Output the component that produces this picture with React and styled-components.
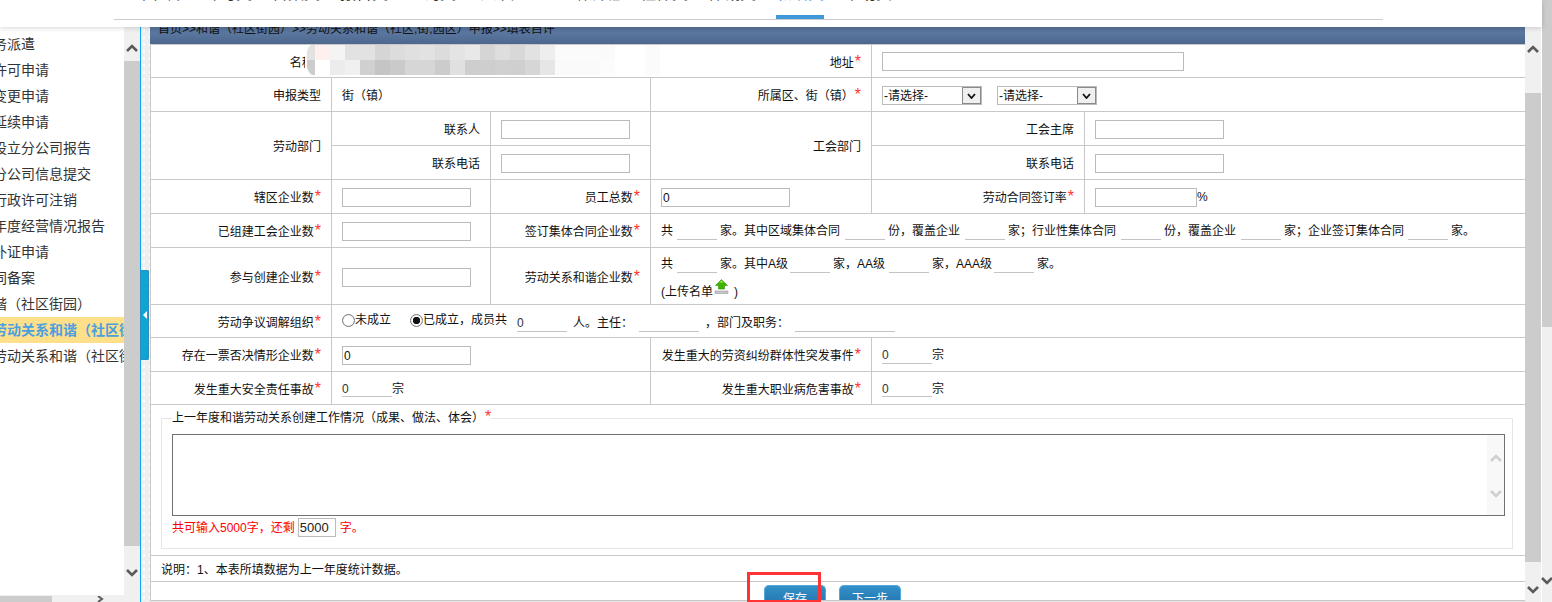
import React from 'react';
import styled, { createGlobalStyle } from 'styled-components';

const GlobalStyle = createGlobalStyle`
  html, body {
    margin: 0;
    padding: 0;
    height: 100%;
    overflow: hidden;
    background: #fff;
  }
  body, input, select, textarea, button {
    font-family: "Liberation Sans", "Noto Sans CJK SC", sans-serif;
    font-size: 12px;
    color: #111;
  }
`;

const Page = styled.div`
  display: flex;
  width: 1552px;
  height: 602px;
  overflow: hidden;
`;

const Column = styled.div`
  display: flex;
  flex-direction: column;
  width: 1542px;
`;

const Header = styled.header`
  position: relative;
  z-index: 2;
  flex: none;
  height: 27px;
  background: #fff;
  box-shadow: 0 1px 5px rgba(0, 0, 0, 0.16);
`;

const Nav = styled.nav`
  display: flex;
  gap: 20px;
  width: 1269px;
  height: 20px;
  margin-left: 114px;
  padding-left: 22px;
  box-sizing: border-box;
  border-bottom: 1px solid #ccc;
`;

const Tab = styled.a`
  display: block;
  flex: none;
  width: 48px;
  height: 19px;
  margin-left: ${props => props.$gap || 0}px;
  font-size: 16px;
  line-height: 16px;
  white-space: nowrap;
  color: ${props => props.$active ? '#3f97dc' : '#333'};
  box-shadow: ${props => props.$active ? 'inset 0 -4px 0 #3f97dc' : 'none'};

  span {
    display: block;
    margin-top: -14px;
  }
`;

const Body = styled.div`
  display: flex;
  flex: 1;
  min-height: 0;
`;

const Sidebar = styled.aside`
  display: flex;
  flex: none;
  width: 140px;
`;

const SideColumn = styled.div`
  display: flex;
  flex-direction: column;
  width: 124px;
`;

const SideList = styled.ul`
  flex: 1;
  margin: 0;
  padding: 4px 0 0;
  list-style: none;
  overflow: hidden;
`;

const SideItem = styled.li`
  height: 26px;
  font-size: 14px;
  font-weight: ${props => props.$active ? 700 : 400};
  line-height: 26px;
  white-space: nowrap;
  overflow: hidden;
  color: ${props => props.$active ? '#4a9fe0' : '#333'};
  background: ${props => props.$active ? '#ffe08a' : 'transparent'};

  span {
    display: block;
    margin-left: -7px;
  }
`;

const HScroll = styled.div`
  display: flex;
  flex: none;
  align-items: flex-start;
  height: 7px;
  background: #f0f0f0;
`;

const HThumb = styled.div`
  width: 52px;
  height: 7px;
  margin-top: 1px;
  background: #ccc;
`;

const HArrow = styled.svg`
  width: 8px;
  height: 7px;
  margin-left: 44px;
  margin-top: 1px;
`;

const VBar = styled.div`
  display: flex;
  flex: none;
  flex-direction: column;
  width: ${props => props.$w}px;
  margin-right: ${props => props.$mr || 0}px;
  background: #f0f0f0;
`;

const BarEnd = styled.div`
  display: flex;
  flex: ${props => props.$grow ? 1 : 'none'};
  justify-content: center;
  height: ${props => props.$h ? `${props.$h}px` : 'auto'};
  padding-top: ${props => props.$pt}px;
  box-sizing: border-box;
`;

const BarThumb = styled.div`
  flex: none;
  height: ${props => props.$h}px;
  background: #ccc;
`;

const Chevron = styled.svg`
  flex: none;
  width: 12px;
  height: 8px;
  fill: none;
  stroke: ${props => props.$color || '#5a5a5a'};
  stroke-width: 2.6;
`;

const Splitter = styled.div`
  flex: none;
  width: 9px;
  border-left: 1px solid #0aa5f5;
  background-color: #efefef;
  background-image: radial-gradient(#fbfbfb 1px, transparent 1.2px);
  background-size: 6px 7px;
`;

const SplitHandle = styled.div`
  display: flex;
  align-items: center;
  justify-content: center;
  height: 90px;
  margin: 243px 0 0 -1px;
  width: 9px;
  border-radius: 2px;
  background: #0fa5d2;
  box-shadow: inset 0 0 0 1px #2c8fc0;
`;

const HandleArrow = styled.div`
  width: 0;
  height: 0;
  border-style: solid;
  border-width: 4px 4px 4px 0;
  border-color: transparent #fff transparent transparent;
`;

const Main = styled.main`
  position: relative;
  display: flex;
  flex: none;
  flex-direction: column;
  width: 1375px;
  overflow: hidden;
`;

const Crumb = styled.div`
  flex: none;
  height: 17px;
  padding-left: 8px;
  box-sizing: border-box;
  overflow: hidden;
  line-height: 12px;
  white-space: nowrap;
  color: #111;
  background: linear-gradient(#587399, #5a779f 35%, #4d678d);

  span {
    display: block;
    margin-top: -4px;
  }
`;

const Table = styled.table`
  width: 1375px;
  table-layout: fixed;
  border-collapse: collapse;
  border: 1px solid #c8c8c8;
  border-bottom: 0;
`;

const Row = styled.tr`
  height: ${props => props.$h}px;
`;

const Label = styled.th`
  padding: 3px 10px 0 0;
  border: 1px solid #c8c8c8;
  font-weight: 400;
  line-height: 16px;
  text-align: right;
  white-space: nowrap;
`;

const Value = styled.td`
  padding: ${props => props.$top ? 0 : 2}px 0 0 10px;
  border: 1px solid #c8c8c8;
  line-height: 16px;
  white-space: nowrap;
  vertical-align: ${props => props.$top ? 'top' : 'middle'};
`;

const Req = styled.em`
  font-style: normal;
  font-size: 16px;
  line-height: 0;
  color: #f33;
  margin-left: 1px;
`;

const BoxInput = styled.input`
  width: ${props => props.$w}px;
  height: 19px;
  margin: 0 0 ${props => props.$mb || 0}px;
  padding: 0 1px;
  box-sizing: border-box;
  border: 1px solid #bbb;
  background: #fff;
  vertical-align: middle;
  outline: none;
`;

const LineInput = styled.input`
  width: ${props => props.$w}px;
  height: 16px;
  margin: 0 ${props => props.$mr ?? 3}px 0 ${props => props.$ml ?? 4}px;
  padding: 0;
  box-sizing: border-box;
  border: 0;
  border-bottom: 1px solid #c4c4c4;
  background: #fff;
  color: #333;
  vertical-align: middle;
  outline: none;
`;

const SelectRow = styled.div`
  display: flex;
  gap: 15px;
`;

const SelectBox = styled.div`
  display: flex;
  width: 100px;
  height: 19px;
  box-sizing: border-box;
  border: 1px solid #bbb;
`;

const Select = styled.select`
  flex: 1;
  min-width: 0;
  padding: 0 0 0 1px;
  border: 0;
  appearance: none;
  background: #fff;
  outline: none;
`;

const SelectArrow = styled.div`
  display: flex;
  flex: none;
  align-items: center;
  justify-content: center;
  width: 19px;
  box-sizing: border-box;
  border: 1px solid #8a8a8a;
  background: #f0f0f0;
`;

const SmallChevron = styled.svg`
  width: 9px;
  height: 6px;
  fill: none;
  stroke: #111;
  stroke-width: 1.8;
`;

const TextLine = styled.div`
  height: ${props => props.$h}px;
  line-height: 28px;
`;

const UploadIcon = styled.svg`
  width: 15px;
  height: 15px;
  margin: 0 5px 0 1px;
  vertical-align: 2px;
`;

const RadioLabel = styled.label`
  display: inline-flex;
  align-items: center;
  margin-right: ${props => props.$mr || 0}px;
`;

const Radio = styled.input`
  width: 13px;
  height: 13px;
  margin: 0;
  appearance: none;
  border: 1px solid #777;
  border-radius: 50%;
  background: #fff;
  box-shadow: inset 0 0 1px #bbb;

  &:checked {
    background: radial-gradient(circle, #111 3.4px, #fff 4px);
  }
`;

const Fieldset = styled.fieldset`
  width: 1352px;
  height: 138px;
  margin: 6px 0 0;
  padding: 0 7px 0 10px;
  box-sizing: border-box;
  border: 1px solid #e6e6e6;
`;

const Legend = styled.legend`
  padding: 0;
  line-height: 14px;
`;

const AreaBox = styled.div`
  display: flex;
  height: 82px;
  margin-top: 9px;
  box-sizing: border-box;
  border: 1px solid #707070;
`;

const Area = styled.textarea`
  flex: 1;
  padding: 2px;
  border: 0;
  resize: none;
  outline: none;
  overflow: hidden;
`;

const AreaBar = styled.div`
  display: flex;
  flex: none;
  flex-direction: column;
  align-items: center;
  gap: 28px;
  width: 17px;
  padding-top: 19px;
  box-sizing: border-box;
  background: #f8f8f8;
`;

const Counter = styled.div`
  display: flex;
  align-items: center;
  gap: 3px;
  height: 19px;
  margin-top: 2px;
  color: #f00;
`;

const CountInput = styled.input`
  width: 38px;
  height: 19px;
  margin: 0 1px 0 0;
  padding: 0 1px;
  box-sizing: border-box;
  border: 1px solid #bbb;
  font-size: 13px;
  color: #222;
  outline: none;
`;

const ActionCell = styled.td`
  position: relative;
  padding: 0;
  border: 1px solid #c8c8c8;
`;

const Actions = styled.div`
  display: flex;
  justify-content: center;
  gap: 13px;
  height: 18px;
  padding: 3px 11px 0 0;
  box-sizing: border-box;
  overflow: hidden;
`;

const Button = styled.button`
  flex: none;
  width: 62px;
  height: 25px;
  padding: 0 0 2px;
  border: 1px solid #55a8da;
  border-bottom: 0;
  border-radius: 5px 5px 0 0;
  color: #fff;
  background: linear-gradient(#3390c8, #1f6ea8);
`;

const Annotation = styled.div`
  position: absolute;
  left: 596px;
  top: -10px;
  width: 74px;
  height: 30px;
  box-sizing: border-box;
  border: 3px solid #f33;
  border-bottom-width: 2px;
`;

const Mosaic = styled.svg`
  position: absolute;
  left: 155px;
  top: 18px;
  width: 355px;
  height: 32px;
`;

const BottomLine = styled.div`
  flex: none;
  height: 1px;
  background: #e6e6e6;
`;

const mosaicRows = [
  ['#fff0f0', '#f4f4f4', '#e2e2e2', '#e2e2e2', '#d5d5d5', '#dcdcdc', '#e0e0e0', '#e2e2e2', '#dcdcdc', '#e4e4e4', '#e8e8e8', '#d5d5d5', '#dedede', '#d8d8d8', '#e2e2e2', '#eeeeee', '#fbfbfb', '#fbfbfb', '#fbfbfb', '#fafafa', '#ffffff', '#ffffff', '#fbfbfb'],
  ['#ffffff', '#ececec', '#f0f0f0', '#d0d0d0', '#c5c5c5', '#cacaca', '#d6d6d6', '#d6d6d6', '#cccccc', '#e0e0e0', '#cecece', '#cecece', '#d0d0d0', '#cfcfcf', '#d6d6d6', '#e6e6e6', '#fafafa', '#fafafa', '#fafafa', '#fcfcfc', '#ffffff', '#ffffff', '#fbfbfb'],
];

const sideItems = ['务派遣', '许可申请', '变更申请', '延续申请', '设立分公司报告', '分公司信息提交', '行政许可注销', '年度经营情况报告', '补证申请', '同备案', '谐（社区街园）', '劳动关系和谐（社区街', '劳动关系和谐（社区街'];

const tabs = [
  { label: '单位库' }, { label: '许可类' }, { label: '备案类' }, { label: '报告类' }, { label: '查询类' },
  { label: '统计表' }, { label: '培训班', gap: 28 }, { label: '社保类' }, { label: '仲裁类' }, { label: '和谐类', active: true }, { label: '帮助页' },
];

const Up = ({ color }) => (
  <Chevron $color={color} viewBox="0 0 12 8"><polyline points="1,7 6,2 11,7" /></Chevron>
);

const Down = ({ color }) => (
  <Chevron $color={color} viewBox="0 0 12 8"><polyline points="1,1 6,6 11,1" /></Chevron>
);

const Star = () => <Req>*</Req>;

function Picker() {
  return (
    <SelectBox>
      <Select defaultValue="">
        <option value="">-请选择-</option>
      </Select>
      <SelectArrow>
        <SmallChevron viewBox="0 0 9 6"><polyline points="1,1 4.5,5 8,1" /></SmallChevron>
      </SelectArrow>
    </SelectBox>
  );
}

export default function App() {
  return (
    <Page>
      <GlobalStyle />
      <Column>
        <Header>
          <Nav>
            {tabs.map(tab => (
              <Tab key={tab.label} $active={tab.active} $gap={tab.gap}>
                <span>{tab.label}</span>
              </Tab>
            ))}
          </Nav>
        </Header>
        <Body>
          <Sidebar>
            <SideColumn>
              <SideList>
                {sideItems.map((item, i) => (
                  <SideItem key={i} $active={i === 11}><span>{item}</span></SideItem>
                ))}
              </SideList>
              <HScroll>
                <HThumb />
                <HArrow viewBox="0 0 8 7"><polyline points="2,0 6,3 2,6" fill="none" stroke="#5a5a5a" strokeWidth="2" /></HArrow>
              </HScroll>
            </SideColumn>
            <VBar $w={16}>
              <BarEnd $h={34} $pt={17}><Up /></BarEnd>
              <BarThumb $h={485} />
              <BarEnd $grow $pt={23}><Down /></BarEnd>
            </VBar>
          </Sidebar>
          <Splitter>
            <SplitHandle><HandleArrow /></SplitHandle>
          </Splitter>
          <Main>
            <Crumb><span>首页&gt;&gt;和谐（社区街园）&gt;&gt;劳动关系和谐（社区,街,园区）申报&gt;&gt;填表自评</span></Crumb>
            <Table>
              <colgroup>
                <col width="181" />
                <col width="159" />
                <col width="160" />
                <col width="221" />
                <col width="213" />
                <col width="441" />
              </colgroup>
              <tbody>
                <Row $h={33}>
                  <Label>名称<Star /></Label>
                  <Value colSpan={2} />
                  <Label>地址<Star /></Label>
                  <Value colSpan={2}><BoxInput $w={302} $mb={2} /></Value>
                </Row>
                <Row $h={34}>
                  <Label>申报类型</Label>
                  <Value colSpan={2}>街（镇）</Value>
                  <Label>所属区、街（镇）<Star /></Label>
                  <Value colSpan={2}>
                    <SelectRow><Picker /><Picker /></SelectRow>
                  </Value>
                </Row>
                <Row $h={34}>
                  <Label rowSpan={2}>劳动部门</Label>
                  <Label>联系人</Label>
                  <Value><BoxInput $w={129} /></Value>
                  <Label rowSpan={2}>工会部门</Label>
                  <Label>工会主席</Label>
                  <Value><BoxInput $w={129} /></Value>
                </Row>
                <Row $h={34}>
                  <Label>联系电话</Label>
                  <Value><BoxInput $w={129} /></Value>
                  <Label>联系电话</Label>
                  <Value><BoxInput $w={129} /></Value>
                </Row>
                <Row $h={34}>
                  <Label>辖区企业数<Star /></Label>
                  <Value><BoxInput $w={129} /></Value>
                  <Label>员工总数<Star /></Label>
                  <Value><BoxInput $w={129} defaultValue="0" /></Value>
                  <Label>劳动合同签订率<Star /></Label>
                  <Value><BoxInput $w={102} />%</Value>
                </Row>
                <Row $h={34}>
                  <Label>已组建工会企业数<Star /></Label>
                  <Value><BoxInput $w={129} /></Value>
                  <Label>签订集体合同企业数<Star /></Label>
                  <Value colSpan={3}>
                    共<LineInput $w={40} />家。其中区域集体合同<LineInput $w={40} $ml={5} />份，覆盖企业<LineInput $w={40} $ml={5} />家；行业性集体合同<LineInput $w={40} $ml={5} />份，覆盖企业<LineInput $w={40} $ml={5} />家；企业签订集体合同<LineInput $w={40} />家。
                  </Value>
                </Row>
                <Row $h={56}>
                  <Label>参与创建企业数<Star /></Label>
                  <Value><BoxInput $w={129} /></Value>
                  <Label>劳动关系和谐企业数<Star /></Label>
                  <Value colSpan={3}>
                    <TextLine $h={28}>
                      共<LineInput $w={40} />家。其中A级<LineInput $w={40} $ml={2} />家，AA级<LineInput $w={40} />家，AAA级<LineInput $w={40} $ml={2} />家。
                    </TextLine>
                    <TextLine $h={26}>
                      (上传名单
                      <UploadIcon viewBox="0 0 15 15">
                        <path d="M7.5 0.5 L13.5 6.5 H10.5 V10 H4.5 V6.5 H1.5 Z" fill="#3cb400" stroke="#2f8f00" strokeWidth="0.6" />
                        <path d="M5.5 3.5 L7.5 1.5 L9.5 3.5 Z" fill="#a8f050" />
                        <rect x="1" y="12" width="13" height="2.5" fill="#c8c8c8" stroke="#8a8a8a" strokeWidth="0.5" />
                      </UploadIcon>
                      )
                    </TextLine>
                  </Value>
                </Row>
                <Row $h={33}>
                  <Label>劳动争议调解组织<Star /></Label>
                  <Value colSpan={5}>
                    <RadioLabel $mr={19}><Radio type="radio" name="org" />未成立</RadioLabel>
                    <RadioLabel><Radio type="radio" name="org" defaultChecked />已成立，成员共</RadioLabel>
                    <LineInput $w={50} $ml={10} $mr={6} defaultValue="0" />人。主任：<LineInput $w={60} $ml={6} $mr={6} />，部门及职务：<LineInput $w={100} $ml={6} />
                  </Value>
                </Row>
                <Row $h={34}>
                  <Label>存在一票否决情形企业数<Star /></Label>
                  <Value colSpan={2}><BoxInput $w={129} defaultValue="0" /></Value>
                  <Label>发生重大的劳资纠纷群体性突发事件<Star /></Label>
                  <Value colSpan={2}><LineInput $w={50} $ml={0} $mr={0} defaultValue="0" />宗</Value>
                </Row>
                <Row $h={33}>
                  <Label>发生重大安全责任事故<Star /></Label>
                  <Value colSpan={2}><LineInput $w={50} $ml={0} $mr={0} defaultValue="0" />宗</Value>
                  <Label>发生重大职业病危害事故<Star /></Label>
                  <Value colSpan={2}><LineInput $w={50} $ml={0} $mr={0} defaultValue="0" />宗</Value>
                </Row>
                <Row $h={151}>
                  <Value colSpan={6} $top>
                    <Fieldset>
                      <Legend>上一年度和谐劳动关系创建工作情况（成果、做法、体会）<Star /></Legend>
                      <AreaBox>
                        <Area />
                        <AreaBar>
                          <Up color="#cfcfcf" />
                          <Down color="#cfcfcf" />
                        </AreaBar>
                      </AreaBox>
                      <Counter>
                        共可输入5000字，还剩<CountInput defaultValue="5000" />字。
                      </Counter>
                    </Fieldset>
                  </Value>
                </Row>
                <Row $h={26}>
                  <Value colSpan={6}>说明：1、本表所填数据为上一年度统计数据。</Value>
                </Row>
                <Row $h={19}>
                  <ActionCell colSpan={6}>
                    <Actions>
                      <Button type="button">保存</Button>
                      <Button type="button">下一步</Button>
                    </Actions>
                    <Annotation />
                  </ActionCell>
                </Row>
              </tbody>
            </Table>
            <BottomLine />
            <Mosaic viewBox="0 0 355 32">
              <rect width="355" height="32" fill="#fff" />
              <path d="M10 0 H6 Q2 3 2 7.5 V15 H10 Z" fill="#e2e2e2" />
              <path d="M2 15 V22 Q3 27 7 30 H10 V15 Z" fill="#cccccc" />
              {mosaicRows.map((cells, y) => cells.map((color, x) => (
                <rect key={`${x}-${y}`} x={10 + x * 15} y={y * 15} width="15" height="15" fill={color} />
              )))}
            </Mosaic>
          </Main>
          <VBar $w={16} $mr={1}>
            <BarEnd $h={66} $pt={18}><Up /></BarEnd>
            <BarThumb $h={469} />
            <BarEnd $grow $pt={24}><Down /></BarEnd>
          </VBar>
        </Body>
      </Column>
      <VBar $w={10}>
        <BarThumb $h={327} />
        <BarEnd $grow $pt={250}><Down /></BarEnd>
      </VBar>
    </Page>
  );
}
